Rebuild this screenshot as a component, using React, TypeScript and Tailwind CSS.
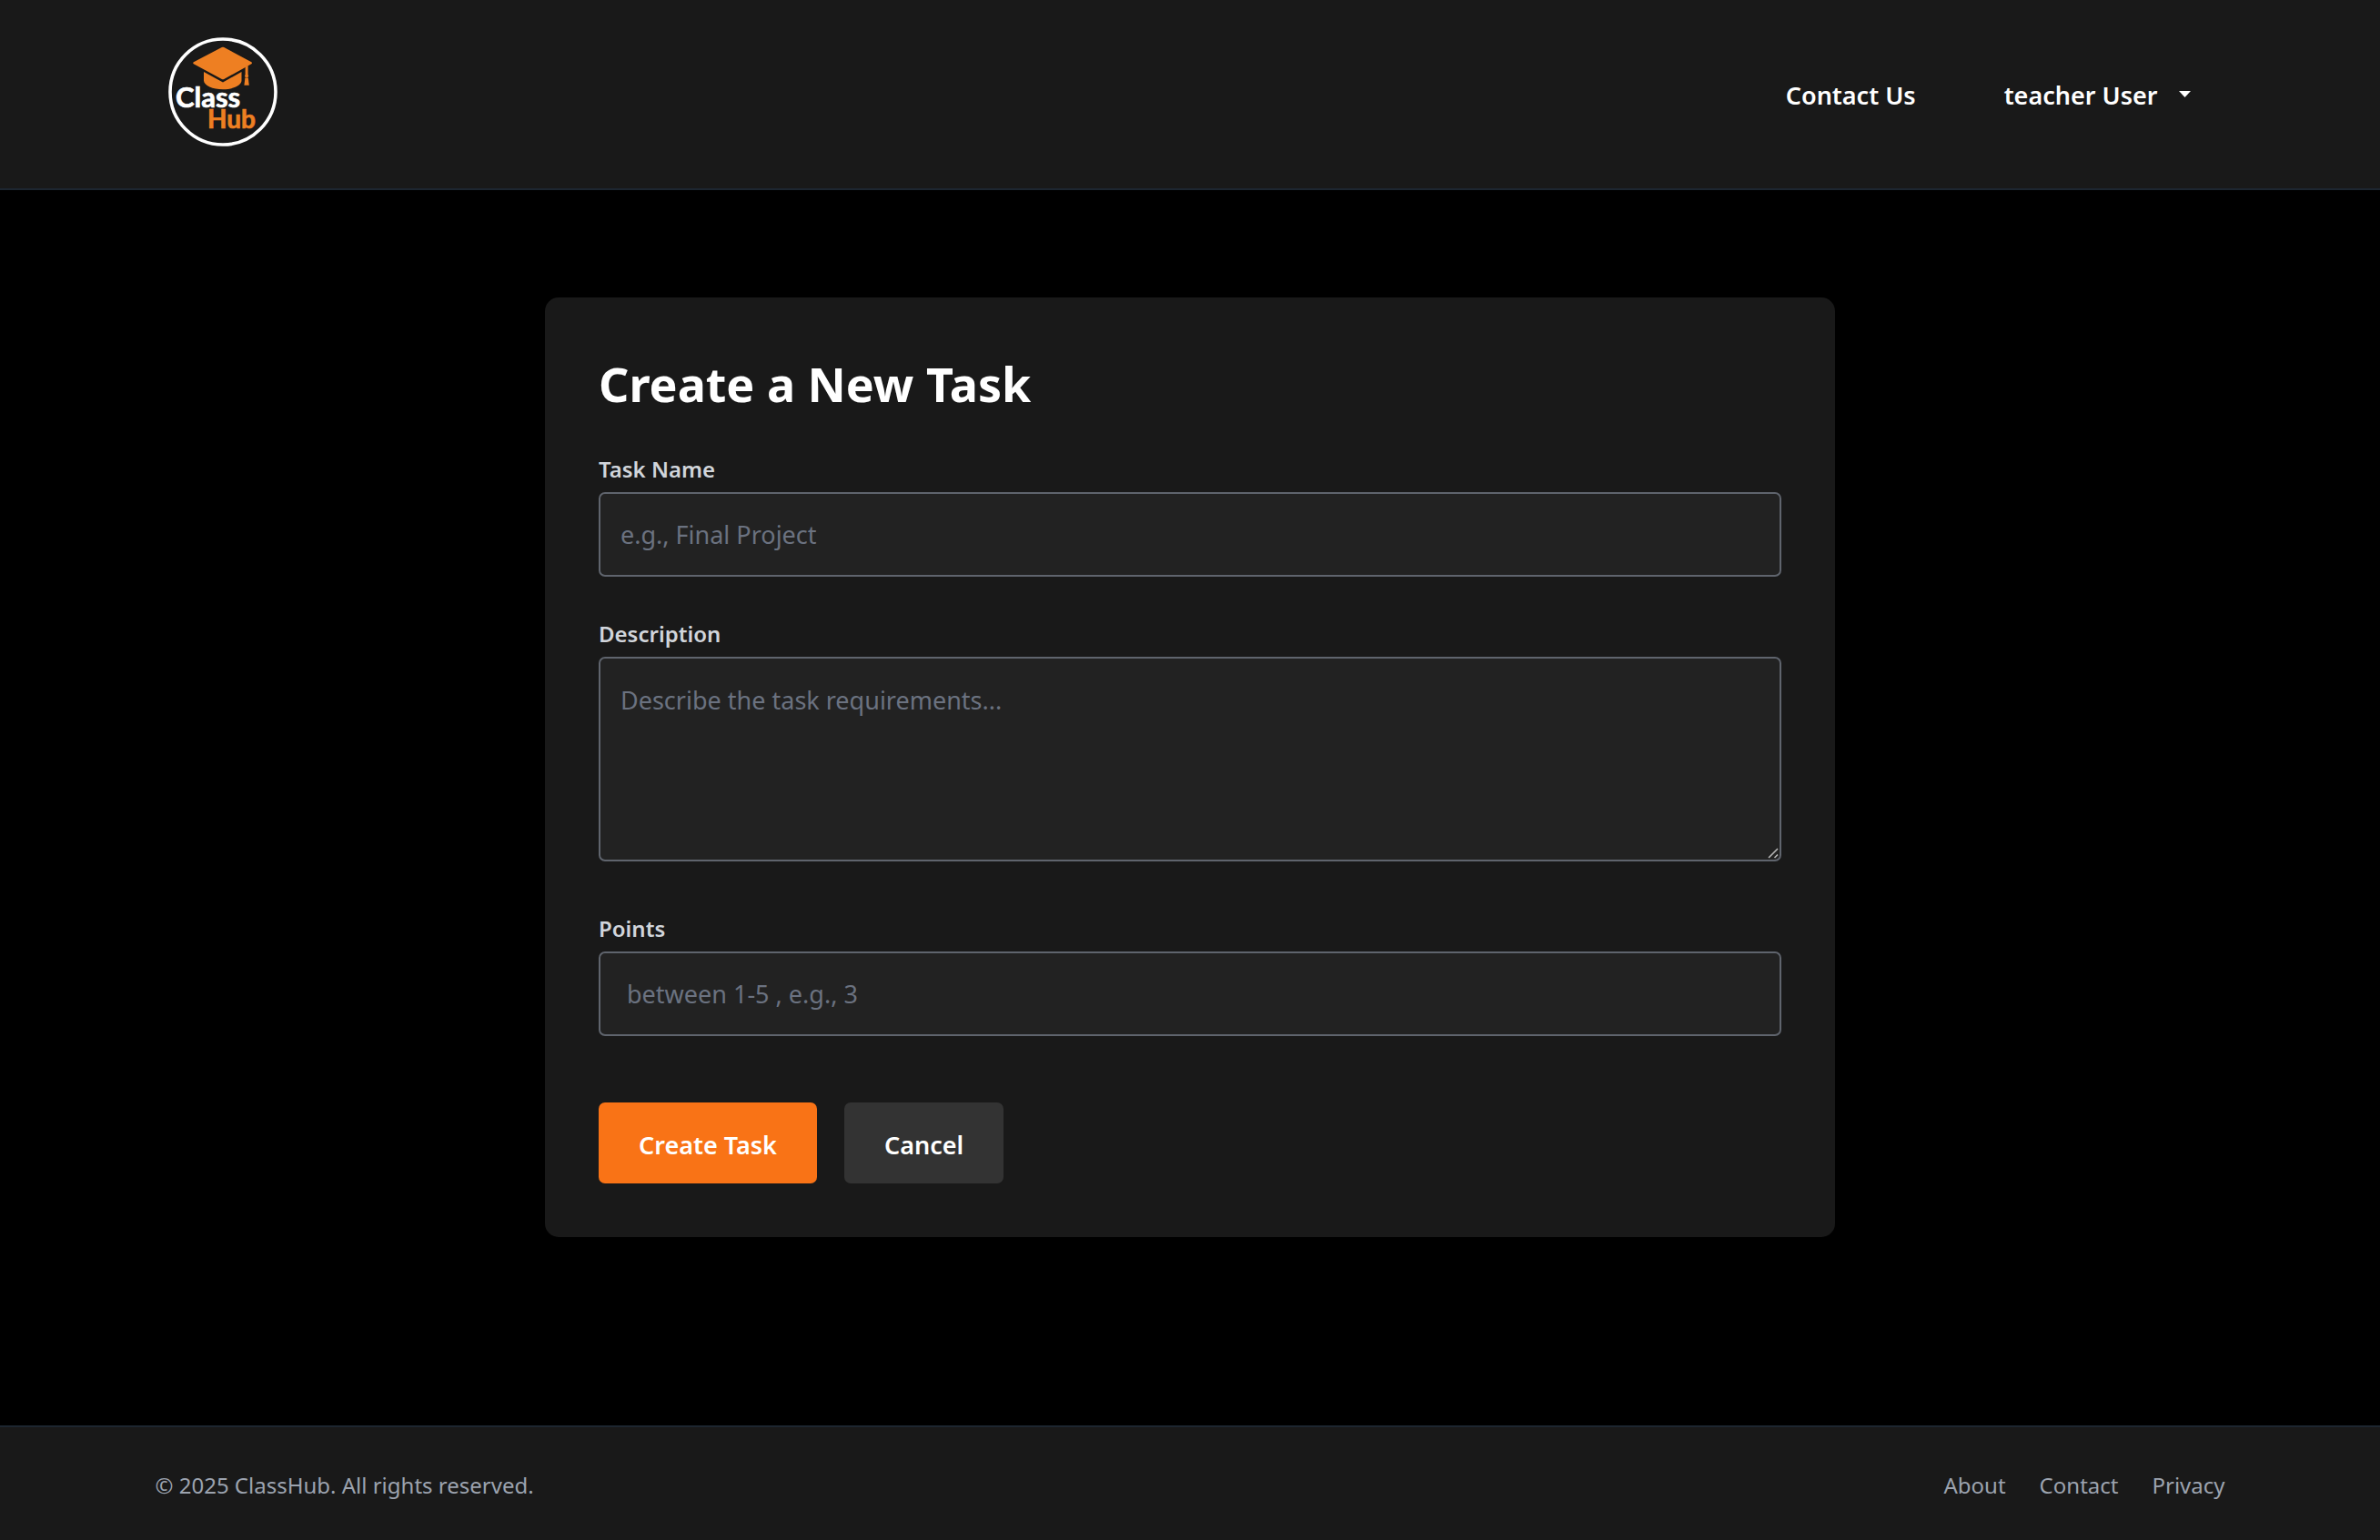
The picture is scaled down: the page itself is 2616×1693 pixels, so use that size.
import type { ReactNode } from "react";

const fieldClass =
  "block w-full rounded-[7px] border-2 border-[#5f646d] bg-[#222222] px-[22px] text-[27px] leading-[44px] text-white placeholder:text-[#6b7280] placeholder:opacity-100 focus:outline-none focus:border-[#f97316]";

function Logo() {
  return (
    <svg viewBox="0 0 120 120" className="size-[120px]" role="img" aria-label="ClassHub">
      <circle cx="60" cy="60" r="58" fill="none" stroke="#ffffff" strokeWidth="3.6" />
      <g fill="#ee7f22">
        <path d="M39 38 L60 49.5 L80.5 38 V47.5 C80.5 53 71 57.3 60 57.3 C49 57.3 39 53 39 47.5 Z" />
        <path
          d="M58.8 11 Q60 10.4 61.2 11 L91.4 27.2 Q92.6 28.3 91.4 29.2 L61.2 46 Q60 46.7 58.8 46 L27.8 29.2 Q26.6 28.3 27.8 27.2 Z"
          stroke="#191919"
          strokeWidth="1.6"
          paintOrder="stroke"
        />
        <path d="M84.6 32.6 L87.6 31 V41.2 H84.6 Z" />
        <circle cx="86.1" cy="42.6" r="2" />
        <path d="M84.4 44.6 H87.8 L88.8 52.8 H83.4 Z" />
      </g>
      <text strokeWidth="0.7" className="font-['Lato',sans-serif] font-bold">
        <tspan x="8" y="77" fill="#ffffff" stroke="#ffffff" className="text-[31px]">
          Class
        </tspan>
        <tspan x="43" y="100" fill="#ee7f22" stroke="#ee7f22" className="text-[28px]">
          Hub
        </tspan>
      </text>
    </svg>
  );
}

function Header() {
  return (
    <header className="border-b-2 border-[#1d2630] bg-[#191919]">
      <div className="mx-auto flex min-h-[207px] max-w-[2363px] items-center justify-between px-11 pt-[41px] pb-[38px]">
        <a href="#" className="ml-[14px] self-start">
          <Logo />
        </a>
        <nav className="flex items-center gap-[97px] pr-[38px] text-[27px] leading-[44px] font-semibold text-white">
          <a href="#contact">Contact Us</a>
          <button type="button" aria-haspopup="menu" className="flex items-center gap-[23px]">
            teacher User
            <svg viewBox="0 0 13 7" className="mb-1 h-[7px] w-[13px]" aria-hidden="true">
              <path d="M0 0 H13 L6.5 7 Z" fill="#ffffff" />
            </svg>
          </button>
        </nav>
      </div>
    </header>
  );
}

function Field({ id, label, children }: { id: string; label: string; children: ReactNode }) {
  return (
    <div>
      <label htmlFor={id} className="mb-[7px] block text-[24px] leading-[37px] font-semibold text-[#d1d5db]">
        {label}
      </label>
      {children}
    </div>
  );
}

function TaskForm() {
  return (
    <form
      className="mx-auto w-full max-w-[1418px] rounded-[15px] bg-[#191919] p-[59px]"
      onSubmit={(event) => event.preventDefault()}
    >
      <h1 className="mb-[39px] text-[52px] leading-[72px] font-bold text-white">Create a New Task</h1>
      <div className="mb-11">
        <Field id="name" label="Task Name">
          <input id="name" type="text" placeholder="e.g., Final Project" className={`${fieldClass} h-[93px]`} />
        </Field>
      </div>
      <div className="mb-[55px]">
        <Field id="description" label="Description">
          <div className="relative">
            <textarea
              id="description"
              placeholder="Describe the task requirements..."
              className={`${fieldClass} h-[225px] resize-y pt-6 pb-5 [&::-webkit-resizer]:bg-transparent`}
            />
            <svg
              viewBox="0 0 12 12"
              className="pointer-events-none absolute right-[3px] bottom-[3px] size-3"
              aria-hidden="true"
            >
              <path d="M1 11 L11 1 M7.5 11 L11 7.5" stroke="#b5b5b5" strokeWidth="1.6" fill="none" />
            </svg>
          </div>
        </Field>
      </div>
      <div className="mb-[73px]">
        <Field id="points" label="Points">
          <input
            id="points"
            type="number"
            min={1}
            max={5}
            placeholder=" between 1-5 , e.g., 3"
            className={`${fieldClass} h-[93px]`}
          />
        </Field>
      </div>
      <div className="flex gap-[30px] text-[27px] leading-[45px] font-semibold text-white">
        <button type="submit" className="rounded-[7px] bg-[#f97316] px-11 pt-6 pb-5">
          Create Task
        </button>
        <button type="button" className="rounded-[7px] bg-[#333333] px-11 pt-6 pb-5">
          Cancel
        </button>
      </div>
    </form>
  );
}

function Footer() {
  return (
    <footer className="border-t-2 border-[#1d2630] bg-[#191919]">
      <div className="mx-auto flex max-w-[2363px] items-center justify-between px-11 pt-[46px] pb-[42px] text-[24px] leading-9 text-[#9ca3af]">
        <p>© 2025 ClassHub. All rights reserved.</p>
        <nav className="flex gap-[37px]">
          <a href="#about">About</a>
          <a href="#contact">Contact</a>
          <a href="#privacy">Privacy</a>
        </nav>
      </div>
    </footer>
  );
}

export default function App() {
  return (
    <div className="flex min-h-screen flex-col bg-black font-['Noto_Sans',sans-serif]">
      <Header />
      <main className="flex-1 px-11 py-[118px]">
        <TaskForm />
      </main>
      <Footer />
    </div>
  );
}
